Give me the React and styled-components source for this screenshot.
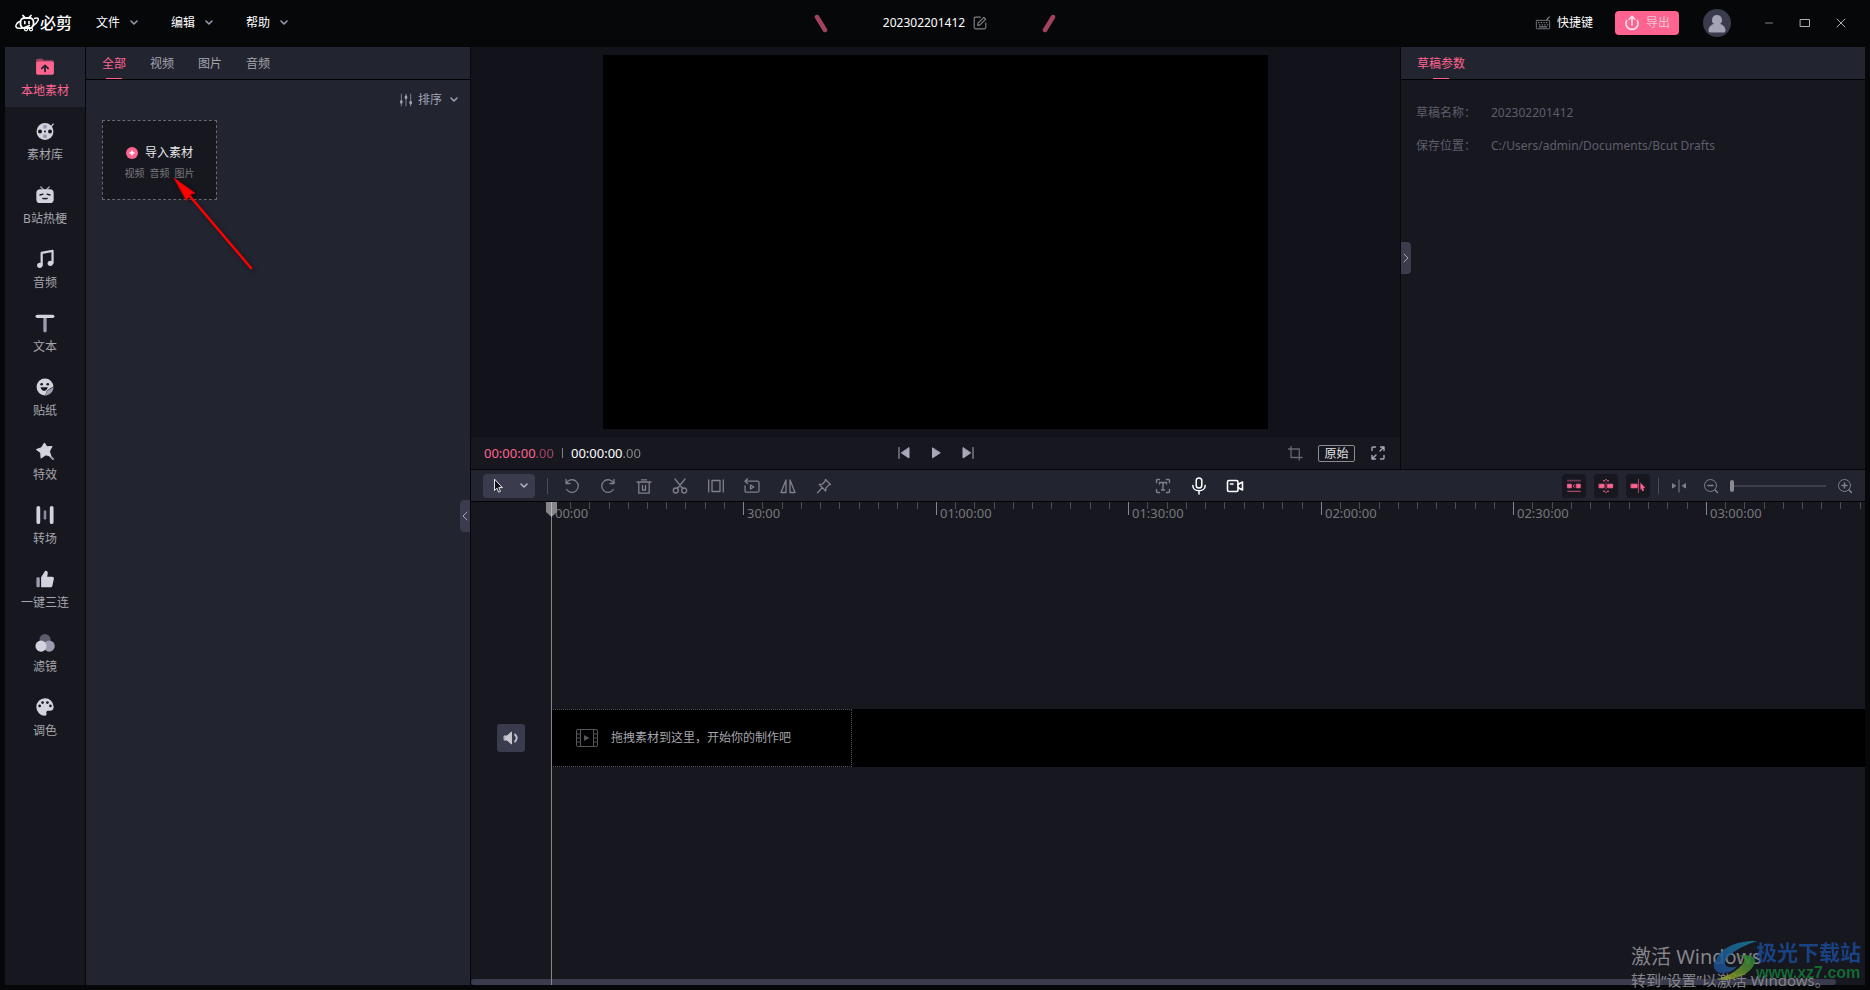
import React, { useState } from 'react'
import styled, { createGlobalStyle, ThemeProvider } from 'styled-components'

const theme = {
  black: '#060709',
  panel: '#171720',
  raised: '#222430',
  stage: '#12121a',
  button: '#3a3b4c',
  pink: '#ff6491',
  tool: '#808088',
  text: '#a5a5ab',
  textDim: '#5d5e6b'
}

// ---------- icons ----------

const Icon = ({ size = 18, children }) => (
  <Svg viewBox="0 0 18 18" width={size} height={size} aria-hidden="true">
    {children}
  </Svg>
)

const Chevron = () => (
  <Svg viewBox="0 0 8 6" width="8" height="6" aria-hidden="true">
    <path d="M1 1l3 3 3-3" strokeWidth="1.5" />
  </Svg>
)

const FolderIcon = () => (
  <Icon size={20}>
    <path d="M1 3a1.5 1.5 0 0 1 1.5-1.5h4L8 3h7.500a1.500 1.500 0 0 1 1.500 1.500V7H1z" fill="#9d4463" stroke="none" />
    <rect x="1" y="4" width="16" height="12" rx="1.500" fill="#ff6491" stroke="none" />
    <path d="M9 13V8M6.200 10.300L9 7.500l2.800 2.800" stroke="#232430" strokeWidth="1.600" />
  </Icon>
)
const ReelIcon = () => (
  <Icon size={20}>
    <circle cx="9" cy="9.500" r="7.600" fill="#d3d3dd" stroke="none" />
    <path d="M14.500 5l1.800-2.200" stroke="#d3d3dd" strokeWidth="1.200" />
    <g stroke="none">
      <circle cx="9" cy="5.200" r="1.800" fill="#9c9cb0" />
      <circle cx="9" cy="13.800" r="1.800" fill="#9c9cb0" />
      <circle cx="4.500" cy="9.500" r="1.800" fill="#171720" />
      <circle cx="13.500" cy="9.500" r="1.800" fill="#171720" />
      <circle cx="9" cy="9.500" r="0.900" fill="#171720" />
    </g>
  </Icon>
)
const BiliIcon = () => (
  <Icon size={20}>
    <path d="M5.300 1.800L7.500 4M12.700 1.800L10.500 4" stroke="#9c9cb0" strokeWidth="1.400" />
    <rect x="1.200" y="3.800" width="15.600" height="12.500" rx="3.500" fill="#d3d3dd" stroke="none" />
    <path d="M4.500 9l2.700-.8M13.500 9l-2.700-.8M7 12q1 1 2 0q1 1 2 0" stroke="#171720" strokeWidth="1.200" />
  </Icon>
)
const MusicIcon = () => (
  <Icon size={20}>
    <path d="M6 14.500V3.500l9.800-1.800v11" stroke="#d3d3dd" strokeWidth="2" />
    <circle cx="4.300" cy="14.700" r="2.400" fill="#d3d3dd" stroke="none" />
    <circle cx="13.800" cy="12.900" r="2.400" fill="#d3d3dd" stroke="none" />
  </Icon>
)
const TextIcon = () => (
  <Icon size={20}>
    <path d="M9 3v13" stroke="#9c9cb0" strokeWidth="3" />
    <path d="M2 3h14" stroke="#d3d3dd" strokeWidth="3" />
  </Icon>
)
const StickerIcon = () => (
  <Icon size={20}>
    <circle cx="9" cy="9" r="7.600" fill="#d3d3dd" stroke="none" />
    <path d="M8.500 17c1.500-.5 1-3 2.200-4.600S14.500 9.800 17.500 8l.5 10z" fill="#171720" stroke="none" />
    <path d="M8.800 16.700c1.200-.6 1-2.600 2.100-4s3.300-2 5.700-3.700c.2 4.200-3.400 7.700-7.800 7.700z" fill="#9c9cb0" stroke="none" />
    <g fill="#171720" stroke="none">
      <circle cx="6" cy="6.500" r="1.200" />
      <circle cx="11.500" cy="6.500" r="1.200" />
      <path d="M5 9.300h6.500q-1 3.200-3.300 3.200T5 9.300z" />
    </g>
  </Icon>
)
const EffectIcon = () => (
  <Icon size={20}>
    <path d="M12.500 12.500l3.700 3.700" stroke="#9c9cb0" strokeWidth="1.800" />
    <path d="M8.500 2l2.100 3.300 4.600-.3-2.300 4.200 1.300 4.300-4.600-1.100-4.100 2.800-.3-4.700L1.500 7.700l4.400-1.600z" fill="#d3d3dd" stroke="#d3d3dd" strokeWidth="1" />
  </Icon>
)
const TransitionIcon = () => (
  <Icon size={20}>
    <path d="M3 2.500v13M15 2.500v13" stroke="#d3d3dd" strokeWidth="3.400" />
    <path d="M9 6v6" stroke="#88889b" strokeWidth="2.400" />
  </Icon>
)
const ThumbIcon = () => (
  <Icon size={20}>
    <rect x="1.300" y="7.500" width="3" height="9" rx="1" fill="#9c9cb0" stroke="none" />
    <path d="M5.500 7.500L8.500 2.600C9 1 11.500 1.500 11.500 3.500L11 7h4.500c1 0 1.700.8 1.500 1.800l-1.400 6.400c-.2.800-.8 1.300-1.600 1.300H5.500z" fill="#d3d3dd" stroke="none" />
  </Icon>
)
const FilterIcon = () => (
  <Icon size={20}>
    <g stroke="none">
      <circle cx="9" cy="6" r="5" fill="#5c5c6d" />
      <circle cx="12.800" cy="11.800" r="5" fill="#9c9cb0" />
      <circle cx="5.400" cy="11.800" r="5" fill="#d3d3dd" />
    </g>
  </Icon>
)
const PaletteIcon = () => (
  <Icon size={20}>
    <path d="M9 1.200a7.800 7.800 0 0 0 0 15.600c2 0 1.200-1.500 1.200-2.600 0-1.500 1-2 2.500-1.800 2.300.3 4.100-.6 4.100-3.600A7.700 7.700 0 0 0 9 1.200z" fill="#d3d3dd" stroke="none" />
    <g fill="#171720" stroke="none">
      <circle cx="4.200" cy="8" r="1.200" />
      <circle cx="6.800" cy="5" r="1.200" />
      <circle cx="11.200" cy="5" r="1.200" />
      <circle cx="13.900" cy="8" r="1.200" />
    </g>
  </Icon>
)

const LogoMark = () => (
  <Svg viewBox="0 0 24 18" width="24" height="18" aria-hidden="true">
    <rect x="5.500" y="4" width="13" height="10" rx="4" strokeWidth="1.800" />
    <path d="M8 1.500l2 2.300M16 1.500l-2 2.300M9.800 7.500v2M14 7.500v2" strokeWidth="1.700" />
    <path d="M4.500 7.500C1 9.500-.5 13 2.500 14c3 .9 8-.5 12-2.500M19.500 4.500C22 3.300 24 4 23 6.500c-.8 2-2.800 4-5.500 5.500" strokeWidth="1.500" />
    <circle cx="11" cy="15.300" r="1.500" strokeWidth="1.200" />
    <circle cx="16" cy="15.300" r="1.500" strokeWidth="1.200" />
  </Svg>
)

const Slash = ({ back }) => (
  <Svg viewBox="0 0 14 20" width="14" height="20" aria-hidden="true">
    <path d={back ? 'M3 4l8 13' : 'M11 4L3 17'} stroke="#a2425f" strokeWidth="4.500" />
  </Svg>
)

// ---------- data ----------

const menus = ['文件', '编辑', '帮助']
const mediaTabs = ['全部', '视频', '图片', '音频']

const sections = [
  { name: '本地素材', icon: <FolderIcon /> },
  { name: '素材库', icon: <ReelIcon /> },
  { name: 'B站热梗', icon: <BiliIcon /> },
  { name: '音频', icon: <MusicIcon /> },
  { name: '文本', icon: <TextIcon /> },
  { name: '贴纸', icon: <StickerIcon /> },
  { name: '特效', icon: <EffectIcon /> },
  { name: '转场', icon: <TransitionIcon /> },
  { name: '一键三连', icon: <ThumbIcon /> },
  { name: '滤镜', icon: <FilterIcon /> },
  { name: '调色', icon: <PaletteIcon /> }
]

const editTools = [
  { name: '撤销', d: 'M3 2.500v4h4M3.300 6.300A6.300 6.300 0 1 1 3.700 12.500' },
  { name: '重做', d: 'M15 2.500v4h-4M14.700 6.300A6.300 6.300 0 1 0 14.300 12.500' },
  { name: '删除', d: 'M2 5h14M6.500 2.800h5M3.800 5.500v10.700h10.400V5.500M7.500 8.500v4.500h3V8.500' },
  {
    name: '剪切',
    d: 'M4 2l7.700 9.500M14 2L6.300 11.500M7.300 13.500a2.500 2.500 0 1 1-5 0a2.500 2.500 0 1 1 5 0M15.700 13.500a2.500 2.500 0 1 1-5 0a2.500 2.500 0 1 1 5 0'
  },
  { name: '定格', d: 'M1.700 3v12M16.300 3v12M5 3.500h8v11H5z' },
  { name: '倒放', d: 'M4.500 1.800L2 4.200l2.500 2.300M2 4.200h12.500q1.500 0 1.500 1.500v8q0 1.500-1.500 1.500h-11Q2 15.200 2 13.700V9M7.500 8v4l3.300-2z' },
  { name: '镜像', d: 'M7 3v12.500H2zM11 3v12.500h5z' },
  { name: '旋转', d: 'M10.500 2.500l5 5-1.800.6-2.700 2.800-.3 3.100-6.500-6.500 3.200-.3L10 4.300zM7.200 10.800L2.500 15.800' }
]

const marks = ['00:00', '30:00', '01:00:00', '01:30:00', '02:00:00', '02:30:00', '03:00:00']
const steps = [...Array(10).keys()]

// ---------- page ----------

const TopBar = () => (
  <Header>
    <BarSide>
      <Brand>
        <LogoMark />
        必剪
      </Brand>
      <Menus>
        {menus.map((menu) => (
          <MenuButton key={menu} type="button">
            {menu}
            <Chevron />
          </MenuButton>
        ))}
      </Menus>
    </BarSide>
    <DraftTitle>
      <Slash back />
      <TitleText>
        202302201412
        <IconButton $size={14} type="button" aria-label="重命名">
          <Icon size={14}>
            <path d="M9.500 1.500H3.500q-2 0-2 2v11q0 2 2 2h11q2 0 2-2V9M6 12l.5-3L14 1.700l2.300 2.300L9 11.500z" strokeWidth="1.500" />
          </Icon>
        </IconButton>
      </TitleText>
      <Slash />
    </DraftTitle>
    <BarSide $end>
      <Shortcut type="button">
        <Icon size={16}>
          <rect x="1.500" y="6" width="15" height="9.500" rx="1" />
          <path d="M4 8.500h.5M7 8.500h.5M10 8.500h.5M13 8.500h.5M5 11h.5M8 11h.5M11 11h.5M14 11h.3M5 13.300h8M13.500 5.500q0-1.500 1.200-2T16 2" strokeWidth="1.400" />
        </Icon>
        <span>快捷键</span>
      </Shortcut>
      <ExportButton type="button">
        <Icon size={16}>
          <path d="M3 6.200a6.800 6.800 0 1 0 12 0M9 11.500V2M5.800 4.800L9 1.600l3.200 3.200" stroke="#ffdfe8" strokeWidth="1.800" />
        </Icon>
        导出
      </ExportButton>
      <Avatar type="button" aria-label="账号">
        <Svg viewBox="0 0 28 28" width="28" height="28" aria-hidden="true">
          <path d="M14 6a5 5 0 0 1 3 9c3 .8 5.500 3 5.500 6.500 0 1.500-1 2-2.500 2H8c-1.500 0-2.500-.5-2.500-2C5.500 18 8 15.800 11 15a5 5 0 0 1 3-9z" fill="#a3a3b5" stroke="none" />
        </Svg>
      </Avatar>
      <IconButton $size={36} type="button" aria-label="最小化">
        <Icon><path d="M5.500 9h7" /></Icon>
      </IconButton>
      <IconButton $size={36} type="button" aria-label="最大化">
        <Icon><path d="M4.500 5.500h9v7h-9z" stroke="#b0b0ba" /></Icon>
      </IconButton>
      <IconButton $size={36} type="button" aria-label="关闭">
        <Icon><path d="M5 5l8 8M13 5l-8 8" stroke="#b0b0ba" /></Icon>
      </IconButton>
    </BarSide>
  </Header>
)

const MediaPanel = () => {
  const [tab, setTab] = useState(mediaTabs[0])
  return (
    <Media>
      <Tabs>
        {mediaTabs.map((name) => (
          <Tab key={name} type="button" $active={name === tab} onClick={() => setTab(name)}>
            {name}
          </Tab>
        ))}
      </Tabs>
      <MediaBody>
        <SortButton type="button">
          <Icon size={14}>
            <path d="M3 1.500v15M9 1.500v15M15 1.500v15" stroke="#77778a" strokeWidth="1.400" />
            <path d="M3 11v1M9 5v1M15 12v1" strokeWidth="3.400" />
          </Icon>
          <span>排序</span>
          <Chevron />
        </SortButton>
        <ImportBox type="button">
          <ImportTitle>
            <Svg viewBox="0 0 12 12" width="12" height="12" aria-hidden="true">
              <circle cx="6" cy="6" r="6" fill="#ff6491" stroke="none" />
              <path d="M6 4v4M4 6h4" stroke="#ffffff" strokeWidth="1.500" />
            </Svg>
            导入素材
          </ImportTitle>
          <ImportHint>
            <span>视频</span>
            <span>音频</span>
            <span>图片</span>
          </ImportHint>
        </ImportBox>
      </MediaBody>
      <CollapseTab type="button" $side="right" aria-label="收起素材">
        <Svg viewBox="0 0 6 10" width="6" height="10"><path d="M5 1L1 5l4 4" /></Svg>
      </CollapseTab>
    </Media>
  )
}

const Preview = () => (
  <PreviewPanel>
    <Stage>
      <Video />
    </Stage>
    <Controls>
      <Times>
        <Time $pink>
          00:00:00<i>.00</i>
        </Time>
        <TimeRule />
        <Time>
          00:00:00<i>.00</i>
        </Time>
      </Times>
      <Transport>
        <IconButton $size={18} $light type="button" aria-label="上一帧">
          <Icon><path d="M4 3.500v11" /><path d="M14 4v10L6.500 9z" fill="currentColor" /></Icon>
        </IconButton>
        <IconButton $size={18} $light type="button" aria-label="播放">
          <Icon><path d="M5.500 4.200v9.600L13 9z" fill="currentColor" /></Icon>
        </IconButton>
        <IconButton $size={18} $light type="button" aria-label="下一帧">
          <Icon><path d="M14 3.500v11" /><path d="M4 4v10L11.500 9z" fill="currentColor" /></Icon>
        </IconButton>
      </Transport>
      <ViewTools>
        <IconButton $size={18} type="button" aria-label="裁剪">
          <Icon><path d="M5 2.500v11h11M2.500 5h10.800v11" stroke="#66666f" strokeWidth="1.300" /></Icon>
        </IconButton>
        <RatioButton type="button">原始</RatioButton>
        <IconButton $size={18} $light type="button" aria-label="全屏">
          <Icon>
            <path d="M3 6.500V4q0-1 1-1h2.500M11.500 3H15v3.500M15 3l-4 4M15 11.500V14q0 1-1 1h-2.500M6.500 15H3v-3.500M3 15l4-4" strokeWidth="1.400" />
          </Icon>
        </IconButton>
      </ViewTools>
    </Controls>
  </PreviewPanel>
)

const DraftPanel = () => (
  <Draft>
    <Tabs>
      <Tab type="button" $active>
        草稿参数
      </Tab>
    </Tabs>
    <Params>
      <dt>草稿名称：</dt>
      <dd>202302201412</dd>
      <dt>保存位置：</dt>
      <dd>C:/Users/admin/Documents/Bcut Drafts</dd>
    </Params>
    <CollapseTab type="button" $side="left" aria-label="收起参数">
      <Svg viewBox="0 0 6 10" width="6" height="10"><path d="M1 1l4 4-4 4" /></Svg>
    </CollapseTab>
  </Draft>
)

const Toolbar = () => {
  const [zoom, setZoom] = useState(0)
  return (
    <ToolRow>
      <ToolGroup>
        <PointerButton type="button" aria-label="选择">
          <Svg viewBox="0 0 10 16" width="10" height="16">
            <path d="M1.500 1.500v11l2.500-2.300 1.600 4 1.900-.8-1.700-3.800H9z" fill="#101016" stroke="#e8e8ec" />
          </Svg>
          <Chevron />
        </PointerButton>
        <Divider />
        <ToolIcons>
          {editTools.map((tool) => (
            <IconButton key={tool.name} $size={18} type="button" aria-label={tool.name}>
              <Icon><path d={tool.d} strokeWidth="1.300" /></Icon>
            </IconButton>
          ))}
        </ToolIcons>
      </ToolGroup>
      <ToolIcons>
        <IconButton $size={18} type="button" aria-label="识别字幕">
          <Icon>
            <path d="M2.500 5.500v-2q0-1 1-1h2M12.500 2.500h2q1 0 1 1v2M15.500 12.500v2q0 1-1 1h-2M5.500 15.500h-2q-1 0-1-1v-2M5.500 7V5.500h7V7M9 5.500v7.500M7.500 13h3" strokeWidth="1.400" />
          </Icon>
        </IconButton>
        <IconButton $size={18} $white type="button" aria-label="录音">
          <Icon>
            <rect x="6.200" y="1" width="5.600" height="10" rx="2.800" strokeWidth="1.500" />
            <path d="M2.800 8.500c0 7 12.400 7 12.400 0M9 14v3" strokeWidth="1.500" />
          </Icon>
        </IconButton>
        <IconButton $size={18} $white type="button" aria-label="录屏">
          <Icon>
            <rect x="1.500" y="3.500" width="10.500" height="11" rx="1.500" strokeWidth="1.600" />
            <path d="M4.500 7h2.500M12 7.500l4.500-2.500v8L12 10.500" strokeWidth="1.600" />
          </Icon>
        </IconButton>
      </ToolIcons>
      <ToolGroup $end>
        <Toggles>
          <Toggle type="button" aria-label="主轨吸附">
            <Icon size={16}>
              <path d="M2 3h14" stroke="#6e3550" strokeWidth="2" />
              <path d="M2 15h14" stroke="#a84668" strokeWidth="1.500" />
              <path d="M2 7h4v4H2zM12 7h4v4h-4z" fill="#ff6491" />
              <path d="M9.500 7.500L8 9l1.500 1.500" />
            </Icon>
          </Toggle>
          <Toggle type="button" aria-label="自动吸附">
            <Icon size={16}>
              <path d="M1.500 7h5.300v4H1.500zM11.200 7h5.300v4h-5.300z" fill="#ff6491" />
              <path d="M9 5.500v7" stroke="#a84668" />
              <path d="M6.500 3h.5M9 2h.1M11 3h.5M6.500 15h.5M9 16h.1M11 15h.5" strokeWidth="1.600" />
            </Icon>
          </Toggle>
          <Toggle type="button" aria-label="预览轴">
            <Icon size={16}>
              <path d="M1.500 7H8v4H1.500z" fill="#ff6491" />
              <path d="M9.500 1.500v15" stroke="#c04f75" />
              <path d="M12 6l5 5h-2.500l1 3-1.500.5-1-3-1 1z" fill="#ff6491" strokeWidth="0.500" />
            </Icon>
          </Toggle>
        </Toggles>
        <SnapGroup>
          <Divider />
          <IconButton $size={18} type="button" aria-label="居中">
            <Icon>
              <path d="M9 3v12" />
              <path d="M2.500 7v4L5.500 9zM15.500 7v4L12.500 9z" fill="currentColor" />
            </Icon>
          </IconButton>
        </SnapGroup>
        <ZoomBox>
          <IconButton $size={18} type="button" aria-label="缩小">
            <Icon><circle cx="8.500" cy="8.500" r="6" /><path d="M6 8.500h5M13 13l2.500 2.500" strokeWidth="1.500" /></Icon>
          </IconButton>
          <ZoomSlider type="range" min="0" max="100" value={zoom} aria-label="时间线缩放" onChange={(e) => setZoom(e.target.value)} />
          <IconButton $size={18} type="button" aria-label="放大">
            <Icon><circle cx="8.500" cy="8.500" r="6" /><path d="M6 8.500h5M8.500 6v5M13 13l2.500 2.500" strokeWidth="1.500" /></Icon>
          </IconButton>
        </ZoomBox>
      </ToolGroup>
    </ToolRow>
  )
}

const Timeline = () => (
  <TimelinePanel>
    <Toolbar />
    <Tracks>
      <TrackHeads>
        <MuteButton type="button" aria-label="静音">
          <Icon>
            <path d="M2.500 7h2.500L9.500 3v12L5 11H2.500z" fill="#c5c5cb" stroke="#c5c5cb" />
            <path d="M13 5.500q3.500 3.500 0 7" stroke="#c5c5cb" strokeWidth="1.800" />
          </Icon>
        </MuteButton>
      </TrackHeads>
      <Lanes>
        <Ruler>
          {marks.map((mark) => (
            <Segment key={mark}>
              <Ticks>
                {steps.map((step) => (
                  <Tick key={step} $major={step === 0} />
                ))}
              </Ticks>
              <Mark>{mark}</Mark>
            </Segment>
          ))}
        </Ruler>
        <LaneArea>
          <Lane>
            <DropHint>
              <Svg viewBox="0 0 22 18" width="22" height="18" aria-hidden="true">
                <g stroke="#55555c">
                  <rect x="0.500" y="0.500" width="21" height="17" rx="1.500" />
                  <path d="M4.500 1v16M17.500 1v16M1 5h3M1 9h3M1 13h3M18 5h3M18 9h3M18 13h3" />
                </g>
                <path d="M8 6v6l5.500-3z" fill="#55555c" stroke="none" />
              </Svg>
              拖拽素材到这里，开始你的制作吧
            </DropHint>
          </Lane>
        </LaneArea>
        <Playhead>
          <Svg viewBox="0 0 11 15" width="11" height="15" aria-hidden="true">
            <path d="M0 0h11v10l-5.500 5L0 10z" fill="#85858a" stroke="none" />
            <path d="M5.500 0v15" stroke="#b5b5ba" />
          </Svg>
        </Playhead>
      </Lanes>
    </Tracks>
    <ScrollTrack>
      <ScrollThumb />
    </ScrollTrack>
  </TimelinePanel>
)

const App = () => {
  const [section, setSection] = useState(sections[0].name)
  return (
    <ThemeProvider theme={theme}>
      <GlobalStyle />
      <Page>
        <TopBar />
        <Workspace>
          <Sidebar>
            {sections.map(({ name, icon }) => (
              <SideItem key={name} type="button" $active={name === section} onClick={() => setSection(name)}>
                {icon}
                {name}
              </SideItem>
            ))}
          </Sidebar>
          <MediaPanel />
          <Editor>
            <EditorTop>
              <Preview />
              <DraftPanel />
            </EditorTop>
            <Timeline />
          </Editor>
        </Workspace>

        <Pointer viewBox="0 0 90 100" width="90" height="100" aria-hidden="true">
          <path d="M18 23L81 97" stroke="#ff0000" strokeWidth="2.500" />
          <path d="M4 7l21 15-5 1.500-3.500 6z" fill="#ff0000" stroke="#ff0000" strokeWidth="0.500" />
        </Pointer>
        <Activation>
          <ActivationTitle>激活 Windows</ActivationTitle>
          <ActivationText>转到“设置”以激活 Windows。</ActivationText>
        </Activation>
        <SiteMark>
          <Svg viewBox="0 0 46 42" width="46" height="42" aria-hidden="true">
            <defs>
              <linearGradient id="swooshBlue" x1="0" y1="1" x2="1" y2="0">
                <stop offset="0" stopColor="#1f4790" />
                <stop offset="1" stopColor="#167f9c" />
              </linearGradient>
              <linearGradient id="swooshGreen" x1="0" y1="1" x2="1" y2="0">
                <stop offset="0" stopColor="#a3a324" />
                <stop offset="1" stopColor="#1b7c36" />
              </linearGradient>
            </defs>
            <path d="M45 1C28 0 8 6 3 20c-1 3-3 4-2 7 1 4 4 6 8 6 6 0 12-2 15-7-4 2-12 2-12-3C13 15 30 5 45 1z" fill="url(#swooshBlue)" stroke="none" />
            <path d="M20 19c4-3 10-4 11-1 2 6-10 16-26 21 18 3 36-7 37-18 0-7-15-8-22-2z" fill="url(#swooshGreen)" stroke="none" />
          </Svg>
          <SiteText>
            <SiteName>极光下载站</SiteName>
            <SiteUrl>www.xz7.com</SiteUrl>
          </SiteText>
        </SiteMark>
      </Page>
    </ThemeProvider>
  )
}

// ---------- styles ----------

const GlobalStyle = createGlobalStyle`
  * {
    box-sizing: border-box;
  }
  body {
    margin: 0;
    background: #060709;
    font: 12px/18px 'Noto Sans', 'Noto Sans CJK SC', sans-serif;
  }
  button {
    margin: 0;
    padding: 0;
    border: 0;
    background: none;
    color: inherit;
    font: inherit;
    cursor: pointer;
  }
`
const Svg = styled.svg`
  display: block;
  flex: none;
  fill: none;
  stroke: currentColor;
  stroke-linecap: round;
  stroke-linejoin: round;
`
const Page = styled.div`
  position: relative;
  display: flex;
  flex-direction: column;
  min-height: 100vh;
  overflow: hidden;
  background: ${(props) => props.theme.black};
  color: ${(props) => props.theme.text};
`
const Header = styled.header`
  display: grid;
  grid-template-columns: 1fr auto 1fr;
  align-items: center;
  height: 47px;
  padding: 0 11px 1px;
  color: #ffffff;
`
const BarSide = styled.div`
  display: flex;
  align-items: center;
  justify-content: ${(props) => (props.$end ? 'flex-end' : 'flex-start')};
`
const Brand = styled.div`
  display: flex;
  align-items: center;
  gap: 1px;
  padding-left: 4px;
  font-size: 16px;
  font-weight: 500;
`
const Menus = styled.nav`
  display: flex;
  gap: 33px;
  margin-left: 24px;
`
const MenuButton = styled.button`
  display: flex;
  align-items: center;
  gap: 10px;

  svg {
    color: #9c9cb0;
  }
`
const DraftTitle = styled.div`
  display: flex;
  align-items: center;
  gap: 55px;
`
const TitleText = styled.div`
  display: flex;
  align-items: center;
  gap: 8px;
`
const IconButton = styled.button`
  display: flex;
  align-items: center;
  justify-content: center;
  width: ${(props) => props.$size}px;
  height: ${(props) => props.$size}px;
  color: ${(props) => (props.$white ? '#ffffff' : props.$light ? '#a8a8ba' : props.theme.tool)};
`
const Shortcut = styled.button`
  display: flex;
  align-items: center;
  gap: 6px;

  svg {
    color: #808088;
  }
`
const ExportButton = styled.button`
  display: flex;
  align-items: center;
  justify-content: center;
  gap: 6px;
  width: 64px;
  height: 24px;
  margin: 0 24px 0 22px;
  border-radius: 4px;
  background: ${(props) => props.theme.pink};
  color: #e8c6cf;
`
const Avatar = styled.button`
  width: 28px;
  height: 28px;
  margin-right: 20px;
  border-radius: 50%;
  background: ${(props) => props.theme.button};
`
const Workspace = styled.main`
  flex: 1;
  display: grid;
  grid-template-columns: 80px 384px minmax(0, 1fr);
  gap: 1px;
  padding: 0 5px 5px;
`
const Sidebar = styled.nav`
  display: flex;
  flex-direction: column;
  gap: 4px;
  background: ${(props) => props.theme.panel};
`
const SideItem = styled.button`
  display: flex;
  flex-direction: column;
  align-items: center;
  gap: 5px;
  height: 60px;
  padding-top: 10px;
  background: ${(props) => (props.$active ? props.theme.raised : 'none')};
  color: ${(props) => (props.$active ? props.theme.pink : props.theme.text)};
`
const Media = styled.section`
  position: relative;
  display: flex;
  flex-direction: column;
  background: ${(props) => props.theme.raised};
`
const Tabs = styled.div`
  display: flex;
  gap: 24px;
  height: 33px;
  padding: 0 16px;
  border-bottom: 1px solid #020203;
  background: ${(props) => props.theme.raised};
`
const Tab = styled.button`
  position: relative;
  padding-top: 2px;
  color: ${(props) => (props.$active ? props.theme.pink : props.theme.text)};

  &::after {
    content: '';
    position: absolute;
    bottom: 0;
    left: calc(50% - 8px);
    width: 16px;
    height: 1px;
    background: ${(props) => (props.$active ? props.theme.pink : 'transparent')};
  }
`
const MediaBody = styled.div`
  display: flex;
  flex-direction: column;
  gap: 11px;
  padding: 11px 12px 0 16px;
`
const SortButton = styled.button`
  display: flex;
  align-items: center;
  align-self: flex-end;
  gap: 8px;
  color: #a3a3b5;

  span {
    margin-left: -3px;
  }
`
const ImportBox = styled.button`
  display: flex;
  flex-direction: column;
  align-items: center;
  justify-content: center;
  gap: 2px;
  width: 115px;
  height: 80px;
  padding-top: 5px;
  border: 1px dashed #686873;
  background: ${(props) => props.theme.panel};
`
const ImportTitle = styled.span`
  display: flex;
  align-items: center;
  gap: 7px;
  color: #e6e6e8;
`
const ImportHint = styled.span`
  display: flex;
  gap: 5px;
  color: #77777c;
  font-size: 10px;
`
const CollapseTab = styled.button`
  position: absolute;
  top: ${(props) => (props.$side === 'right' ? '453px' : '195px')};
  ${(props) => props.$side}: 0;
  display: flex;
  align-items: center;
  justify-content: center;
  width: 10px;
  height: 32px;
  border-radius: ${(props) => (props.$side === 'right' ? '4px 0 0 4px' : '0 4px 4px 0')};
  background: ${(props) => props.theme.button};
  color: #a3a3b5;
`
const Editor = styled.div`
  display: grid;
  grid-template-rows: 422fr 515fr;
  gap: 1px;
`
const EditorTop = styled.div`
  display: grid;
  grid-template-columns: minmax(0, 1fr) 464px;
  gap: 1px;
`
const PreviewPanel = styled.section`
  display: flex;
  flex-direction: column;
  background: ${(props) => props.theme.stage};
`
const Stage = styled.div`
  flex: 1;
  display: flex;
  justify-content: center;
  padding: 8px;
`
const Video = styled.div`
  aspect-ratio: 16 / 9;
  background: #000000;
`
const Controls = styled.div`
  display: grid;
  grid-template-columns: 1fr auto 1fr;
  align-items: center;
  height: 32px;
  padding: 0 13px;
  background: ${(props) => props.theme.panel};
`
const Times = styled.div`
  display: flex;
  align-items: center;
  gap: 8px;
`
const Time = styled.span`
  color: ${(props) => (props.$pink ? props.theme.pink : '#ffffff')};
  font-size: 13px;

  i {
    font-style: normal;
    opacity: ${(props) => (props.$pink ? 0.6 : 0.45)};
  }
`
const TimeRule = styled.span`
  width: 1px;
  height: 10px;
  background: #808088;
`
const Transport = styled.div`
  display: flex;
  gap: 14px;
`
const ViewTools = styled.div`
  display: flex;
  align-items: center;
  justify-content: flex-end;
  gap: 14px;
`
const RatioButton = styled.button`
  width: 37px;
  height: 17px;
  border: 1px solid #8a8a96;
  border-radius: 2px;
  color: #e0e0e4;
  line-height: 15px;
`
const Draft = styled.section`
  position: relative;
  background: ${(props) => props.theme.panel};
`
const Params = styled.dl`
  display: grid;
  grid-template-columns: 75px 1fr;
  row-gap: 15px;
  margin: 0;
  padding: 24px 0 0 15px;
  color: ${(props) => props.theme.textDim};

  dd {
    margin: 0;
  }
`
const TimelinePanel = styled.section`
  display: flex;
  flex-direction: column;
  background: ${(props) => props.theme.panel};
`
const ToolRow = styled.div`
  display: flex;
  align-items: center;
  justify-content: space-between;
  height: 32px;
  padding: 0 11px 0 12px;
  border-bottom: 1px solid #020203;
  background: ${(props) => props.theme.raised};
`
const ToolGroup = styled.div`
  display: flex;
  align-items: center;
  gap: ${(props) => (props.$end ? '8px' : '12px')};
`
const ToolIcons = styled.div`
  display: flex;
  gap: 18px;
  margin-left: 3px;
`
const SnapGroup = styled.div`
  display: flex;
  align-items: center;
  gap: 11px;
`
const PointerButton = styled.button`
  display: flex;
  align-items: center;
  justify-content: space-between;
  width: 52px;
  height: 24px;
  padding: 0 7px 0 10px;
  border-radius: 4px;
  background: ${(props) => props.theme.button};
  color: #b5b5c5;
`
const Divider = styled.span`
  width: 1px;
  height: 16px;
  background: #4a4b5c;
`
const Toggles = styled.div`
  display: flex;
  gap: 8px;
`
const Toggle = styled.button`
  display: flex;
  align-items: center;
  justify-content: center;
  width: 24px;
  height: 24px;
  border-radius: 4px;
  background: ${(props) => props.theme.panel};
  color: ${(props) => props.theme.pink};
`
const ZoomBox = styled.div`
  display: flex;
  align-items: center;
  gap: 10px;
  margin-left: 6px;
`
const ZoomSlider = styled.input`
  width: 96px;
  height: 12px;
  margin: 0;
  appearance: none;
  background: linear-gradient(#3e3e4b, #3e3e4b) center / 100% 2px no-repeat;

  &::-webkit-slider-thumb {
    appearance: none;
    width: 4px;
    height: 12px;
    border-radius: 2px;
    background: #8a8a90;
  }
`
const Tracks = styled.div`
  flex: 1;
  display: grid;
  grid-template-columns: 80px minmax(0, 1fr);
`
const TrackHeads = styled.div`
  display: flex;
  align-items: center;
  justify-content: center;
  padding-bottom: 6px;
`
const MuteButton = styled.button`
  display: flex;
  align-items: center;
  justify-content: center;
  width: 28px;
  height: 28px;
  border-radius: 3px;
  background: ${(props) => props.theme.button};
`
const Lanes = styled.div`
  position: relative;
  display: flex;
  flex-direction: column;
`
const Ruler = styled.div`
  display: flex;
  height: 20px;
  overflow: hidden;
`
const Segment = styled.div`
  flex: none;
  display: grid;
  width: 192px;

  > * {
    grid-area: 1 / 1;
  }
  &:nth-child(even) {
    width: 193px;
  }
`
const Ticks = styled.div`
  display: grid;
  grid-template-columns: repeat(10, 1fr);
`
const Tick = styled.span`
  width: 1px;
  height: ${(props) => (props.$major ? '13px' : '7px')};
  background: ${(props) => (props.$major ? '#85858a' : '#4c4c56')};
`
const Mark = styled.span`
  padding: 2px 0 0 4px;
  color: #77777c;
  font-size: 13px;
`
const LaneArea = styled.div`
  flex: 1;
  display: flex;
  flex-direction: column;
  justify-content: center;
  padding-bottom: 26px;
`
const Lane = styled.div`
  display: flex;
  height: 58px;
  background: #000000;
`
const DropHint = styled.div`
  display: flex;
  align-items: center;
  gap: 13px;
  width: 301px;
  padding-left: 24px;
  border: 1px dotted #55555c;
`
const Playhead = styled.div`
  position: absolute;
  top: 0;
  bottom: -6px;
  left: -5px;
  width: 11px;
  background: linear-gradient(#85858a, #85858a) center / 1px 100% no-repeat;
`
const ScrollTrack = styled.div`
  height: 6px;
  padding-right: 29px;
`
const ScrollThumb = styled.div`
  height: 6px;
  border-radius: 3px;
  background: ${(props) => props.theme.button};
`
const Pointer = styled(Svg)`
  position: absolute;
  top: 171px;
  left: 170px;
  filter: drop-shadow(2px 2px 2px rgba(0, 0, 0, 0.5));
`
const Activation = styled.div`
  position: absolute;
  right: 40px;
  bottom: 0;
  width: 199px;
  color: #85858a;
  white-space: nowrap;
`
const ActivationTitle = styled.div`
  font-size: 20px;
  line-height: 26px;
`
const ActivationText = styled.div`
  font-size: 15px;
  line-height: 20px;
`
const SiteMark = styled.div`
  position: absolute;
  right: 9px;
  bottom: 8px;
  display: flex;
  opacity: 0.85;
`
const SiteText = styled.div`
  margin-left: -3px;
`
const SiteName = styled.div`
  color: #1a4a94;
  font-size: 21px;
  font-weight: 700;
  line-height: 24px;
`
const SiteUrl = styled.div`
  color: #127a35;
  font: 700 16px/18px 'Liberation Sans', sans-serif;
`

export default App
